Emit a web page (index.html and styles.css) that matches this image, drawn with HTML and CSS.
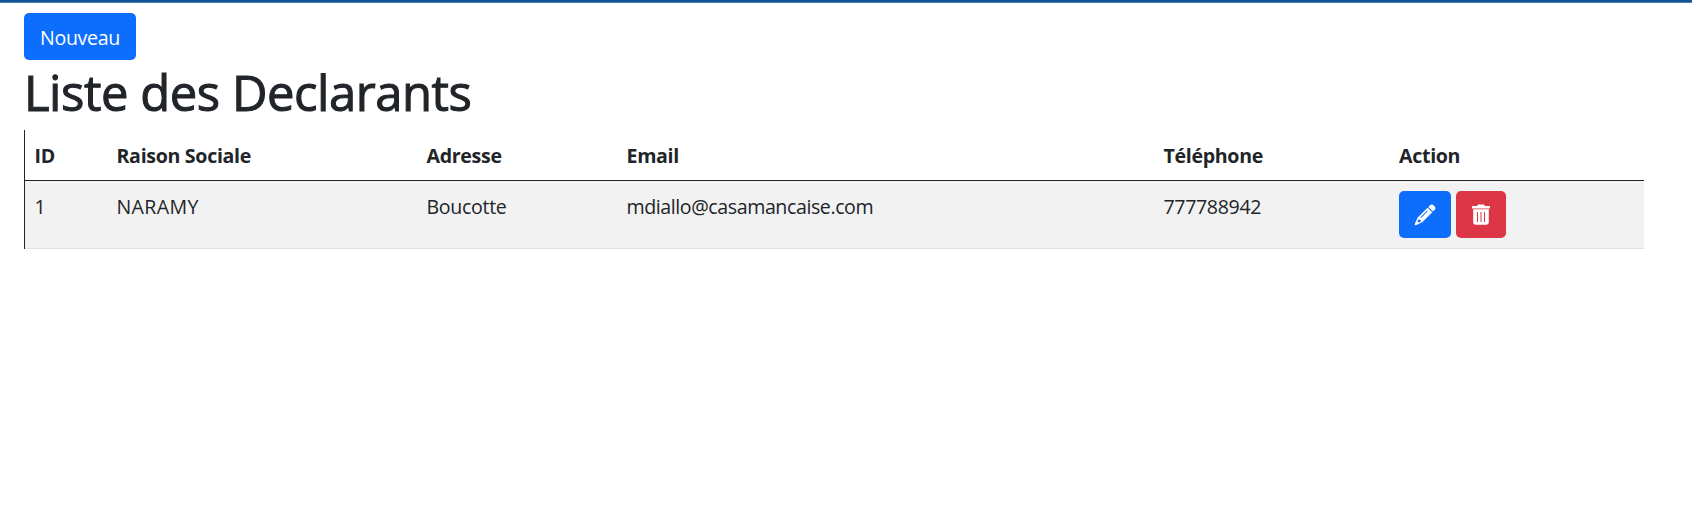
FILE: index.html
```html
<!DOCTYPE html>
<html lang="fr">
<head>
<meta charset="utf-8">
<title>Liste des Declarants</title>
<link rel="stylesheet" href="styles.css">
</head>
<body>
<div class="topbar"></div>
<main class="page">
  <button class="btn btn-primary btn-new">Nouveau</button>
  <h1 class="title">Liste des Declarants</h1>
  <table class="table">
    <colgroup><col class="c-id"><col class="c-name"><col class="c-address"><col class="c-email"><col class="c-phone"><col class="c-action"></colgroup>
    <thead>
      <tr><th>ID</th><th>Raison Sociale</th><th>Adresse</th><th>Email</th><th>Téléphone</th><th class="action-head">Action</th></tr>
    </thead>
    <tbody>
      <tr>
        <td>1</td><td class="name">NARAMY</td><td>Boucotte</td><td class="email">mdiallo@casamancaise.com</td><td class="phone">777788942</td>
        <td class="action-cell">
          <div class="actions">
            <button class="btn btn-primary btn-edit" aria-label="Modifier"><svg width="22" height="22" viewBox="0 0 22 22" fill="currentColor"><path d="M15.800 1.500q2-1.800 4 .1l.7.7q1.700 1.900 0 3.800l-1.400 1.400-4.700-4.600z"/><path fill-rule="evenodd" d="M13.600 3.700l4.700 4.600L8.500 18.100 1.900 21.200q-1.400.4-1.100-1.100L3.700 13.500zM13.100 6.600L6.400 13.300l.6.6L13.700 7.200zM4.600 15.200l-1.100 2.600.8.8 2.600-1-.3-1.700z"/></svg></button>
            <button class="btn btn-danger btn-delete" aria-label="Supprimer"><svg width="18" height="21" viewBox="0 0 18 21" fill="currentColor"><path d="M6 .5h6l1 1.500h4.500q.5 0 .5.500v1.500q0 .5-.5.500H.5Q0 4.500 0 4V2.500Q0 2 .5 2H5z"/><path fill-rule="evenodd" d="M1.200 5.300h15.600V18q0 2.800-2.800 2.800H4Q1.200 20.800 1.200 18zM5 8v10h1V8zM8.500 8v10h1V8zM12 8v10h1V8z"/></svg></button>
          </div>
        </td>
      </tr>
    </tbody>
  </table>
</main>
</body>
</html>
```
FILE: styles.css
```css
* { box-sizing: border-box; }
body {
  margin: 0;
  background: #fff;
  color: #212529;
  font: 400 19.6px/30px "Open Sans", "Noto Sans", sans-serif;
  letter-spacing: -0.32px;
}
.topbar { height: 3px; background: #145296; border-bottom: 1px solid #4a7db4; }
.page { padding: 10px 48px 0 24px; }
.btn {
  display: flex;
  align-items: center;
  justify-content: center;
  height: 47px;
  padding: 0;
  border: 0;
  border-radius: 5px;
  color: #fff;
  font: inherit;
  letter-spacing: inherit;
}
.btn svg { display: block; }
.btn-primary { background: #0d6efd; }
.btn-danger { background: #dc3545; }
.btn-new { width: 112px; padding-top: 2px; }
.btn-edit { width: 52px; }
.btn-delete { width: 50px; }
.title {
  margin: 2px 0 8px;
  font-size: 49px;
  line-height: 60px;
  font-weight: 500;
  letter-spacing: -0.47px;
  -webkit-text-stroke: 1px #212529;
}
.table {
  width: 1620px;
  table-layout: fixed;
  border-spacing: 0;
  border-left: 1px solid #212529;
}
.c-id { width: 82px; }
.c-name { width: 310px; }
.c-address { width: 200px; }
.c-email { width: 537px; }
.c-phone { width: 235px; }
th {
  height: 51px;
  padding: 11px 9px 9px 9.5px;
  text-align: left;
  font-weight: 700;
  border-bottom: 1px solid #212529;
}
td {
  height: 68px;
  padding: 11px 9px 9px 9.5px;
  vertical-align: top;
  background: #f2f2f2;
  border-bottom: 1px solid #dee2e6;
}
.name { letter-spacing: 0.36px; }
.email { letter-spacing: -0.42px; }
.phone { letter-spacing: -0.36px; }
.action-head { padding-left: 10px; }
.action-cell { padding: 10px 9px 10px 10px; }
.actions { display: flex; gap: 5px; }
```
